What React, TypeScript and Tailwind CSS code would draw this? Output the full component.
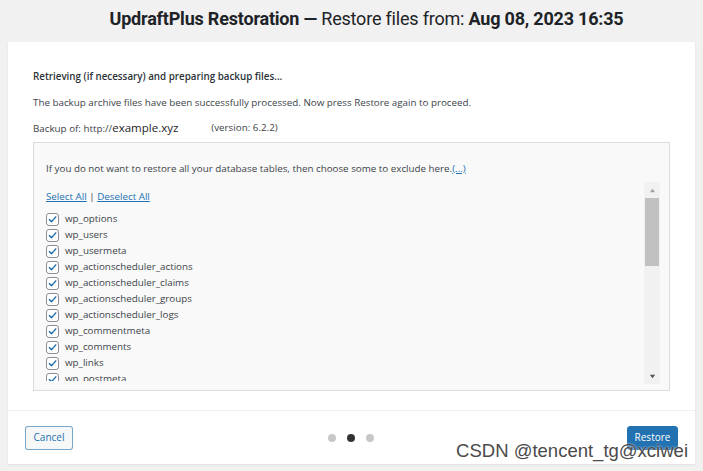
import React from "react";

const tables = [
  "wp_options",
  "wp_users",
  "wp_usermeta",
  "wp_actionscheduler_actions",
  "wp_actionscheduler_claims",
  "wp_actionscheduler_groups",
  "wp_actionscheduler_logs",
  "wp_commentmeta",
  "wp_comments",
  "wp_links",
  "wp_postmeta",
];

const CheckBox = () => (
  <span className="flex items-center justify-center w-[13px] h-[13px] shrink-0 border border-[#8c8f94] rounded-[3px] bg-white">
    <svg viewBox="0 0 16 16" className="w-[13px] h-[13px]">
      <path d="M3.5 8.2 L6.6 11.2 L12.8 4.2" fill="none" stroke="#2271b1" strokeWidth="2.1" strokeLinecap="round" strokeLinejoin="round" />
    </svg>
  </span>
);

const Scrollbar = () => (
  <div className="flex flex-col w-[16px] shrink-0 bg-[#f1f1f1] h-full">
    <div className="flex items-center justify-center h-[16px]">
      <svg viewBox="0 0 8 8" className="w-[7px] h-[7px]">
        <path d="M1 6 L4 2 L7 6 Z" fill="#a3a3a3" />
      </svg>
    </div>
    <div className="mx-[1px] h-[68px] bg-[#c1c1c1]"></div>
    <div className="flex-1"></div>
    <div className="flex items-center justify-center h-[16px]">
      <svg viewBox="0 0 8 8" className="w-[7px] h-[7px]">
        <path d="M1 2 L4 6 L7 2 Z" fill="#505050" />
      </svg>
    </div>
  </div>
);

export default function App() {
  return (
    <div className="relative w-[703px] h-[471px] overflow-hidden bg-[#f1f1f1] font-['Open_Sans','Noto_Sans',sans-serif] text-[#3c434a]">
      <div className="flex items-center justify-center h-[42px] pb-[6px] pl-[30px]">
        <h1 className="text-[18px] text-[#1d2327] font-['Roboto','Noto_Sans',sans-serif] tracking-[-0.2px]">
          <span className="font-bold">UpdraftPlus Restoration — </span>
          <span>Restore files from: </span>
          <span className="font-bold">Aug 08, 2023 16:35</span>
        </h1>
      </div>

      <div className="mx-[8px] h-[422px] bg-white flex flex-col shadow-[0_1px_2px_rgba(0,0,0,0.08)]">
        <div className="flex-1 px-[25px] pt-[27px] text-[9.8px] leading-[16px]">
          <p className="font-semibold text-[#2c3338]">Retrieving (if necessary) and preparing backup files...</p>
          <p className="mt-[10px]">The backup archive files have been successfully processed. Now press Restore again to proceed.</p>
          <p className="mt-[9px] flex">
            <span>
              Backup of: http://<span className="text-[11.5px] text-[#1d2327]">example.xyz</span>
            </span>
            <span className="ml-[33px]">(version: 6.2.2)</span>
          </p>

          <div className="mt-[5px] h-[249px] border border-[#dcdcde] bg-[#f9f9f9] flex flex-col pl-[12px] pr-[9px] pt-[18px]">
            <p className="leading-[16px]">
              If you do not want to restore all your database tables, then choose some to exclude here.
              <a className="text-[#2271b1] underline">(...)</a>
            </p>
            <div className="mt-[5px] flex h-[202px]">
              <div className="flex-1 overflow-hidden h-[199px] pt-[7px]">
                <p className="leading-[16px]">
                  <a className="text-[#2271b1] underline">Select All</a>
                  <span className="text-[#3c434a]"> | </span>
                  <a className="text-[#2271b1] underline">Deselect All</a>
                </p>
                <div className="mt-[6px] flex flex-col">
                  {tables.map((t) => (
                    <label key={t} className="flex items-center gap-[6px] h-[16px]">
                      <CheckBox />
                      <span>{t}</span>
                    </label>
                  ))}
                </div>
              </div>
              <Scrollbar />
            </div>
          </div>
        </div>

        <div className="h-[54px] border-t border-[#f0f0f1] flex items-center justify-between px-[17px]">
          <button className="h-[24px] w-[48px] text-[10px] text-[#2271b1] border border-[#2271b1]/60 rounded-[3px] bg-[#f6f7f7]">
            Cancel
          </button>
          <div className="flex items-center gap-[11px] ml-[2px]">
            <span className="w-[8px] h-[8px] rounded-full bg-[#c8c8c8]"></span>
            <span className="w-[8px] h-[8px] rounded-full bg-[#333]"></span>
            <span className="w-[8px] h-[8px] rounded-full bg-[#c8c8c8]"></span>
          </div>
          <button className="h-[24px] w-[51px] text-[10px] text-white bg-[#2271b1] border border-[#2271b1] rounded-[3px]">
            Restore
          </button>
        </div>
      </div>

      <div className="absolute right-[15px] top-[440px] text-[18.5px] leading-[22px] text-[#4a4a4a] font-['Liberation_Sans',Arial,sans-serif] [text-shadow:0_0_2px_#fff]">
        CSDN @tencent_tg@xciwei
      </div>
    </div>
  );
}
